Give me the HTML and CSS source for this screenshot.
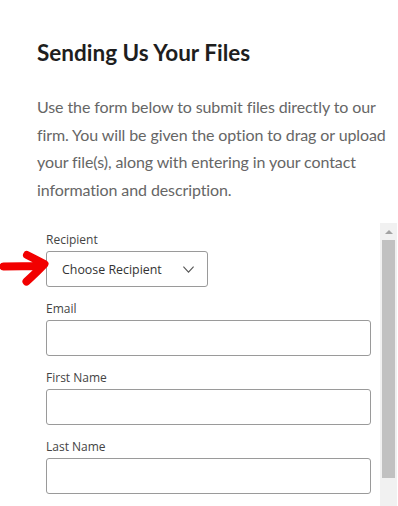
FILE: index.html
```html
<!DOCTYPE html>
<html>
<head>
<meta charset="utf-8">
<link rel="stylesheet" href="styles.css">
</head>
<body>
<div class="page">
  <div class="intro">
    <h1 class="title">Sending Us Your Files</h1>
    <p class="lead">Use the form below to submit files directly to our<br>firm. You will be given the option to drag or upload<br>your file(s), along with entering in your contact<br>information and description.</p>
  </div>
  <div class="frame">
    <form class="form">
      <div class="field">
        <label class="label">Recipient</label>
        <div class="select">
          <span class="select-text">Choose Recipient</span>
          <svg class="chev" width="11" height="7" viewBox="0 0 11 7"><path d="M0.4 0.6 L5.5 6.2 L10.6 0.6" fill="none" stroke="#555" stroke-width="1.1"/></svg>
        </div>
      </div>
      <div class="field">
        <label class="label">Email</label>
        <div class="input"></div>
      </div>
      <div class="field">
        <label class="label">First Name</label>
        <div class="input"></div>
      </div>
      <div class="field">
        <label class="label">Last Name</label>
        <div class="input"></div>
      </div>
    </form>
    <div class="scrollbar">
      <div class="sb-up"><span class="sb-tri"></span></div>
      <div class="sb-thumb"></div>
    </div>
  </div>
  <svg class="arrow" width="50" height="40" viewBox="0 0 50 40"><path d="M3.5 16.5 L41 16 M27 5 Q36 9.5 44.5 14 Q37 22 26.5 31.5" fill="none" stroke="#f20000" stroke-width="8" stroke-linecap="round" stroke-linejoin="round"/></svg>
</div>
</body>
</html>
```

FILE: styles.css
```css
html, body {
  margin: 0;
  padding: 0;
  background: #fff;
  overflow: hidden;
}
.page {
  position: relative;
  width: 398px;
  height: 506px;
  overflow: hidden;
}
.intro {
  padding: 40px 0 0 37px;
}
.title {
  margin: 0;
  font-family: Lato, "Liberation Sans", sans-serif;
  font-weight: 700;
  font-size: 22.5px;
  line-height: 26px;
  color: #1e1e1e;
  letter-spacing: 0;
}
.lead {
  margin: 27px 0 0 0;
  font-family: Lato, "Liberation Sans", sans-serif;
  font-size: 16px;
  line-height: 27.5px;
  color: #666;
  white-space: nowrap;
  letter-spacing: -0.1px;
}
.frame {
  display: flex;
  margin-top: 20px;
  height: 300px;
}
.form {
  flex: 1;
  padding: 9px 9px 0 46px;
  font-family: "Open Sans", "Liberation Sans", sans-serif;
}
.field {
  margin-bottom: 14px;
}
.label {
  display: block;
  font-size: 12px;
  line-height: 16px;
  color: #444;
  margin-bottom: 3px;
}
.input {
  height: 36px;
  box-sizing: border-box;
  border: 1px solid #9a9a9a;
  border-radius: 3px;
}
.select {
  width: 162px;
  height: 36px;
  box-sizing: border-box;
  border: 1px solid #9a9a9a;
  border-radius: 3px;
  display: flex;
  align-items: center;
  justify-content: space-between;
  padding: 0 13px 0 15px;
}
.select-text {
  font-size: 12.4px;
  color: #333;
}
.chev {
  display: block;
  margin-top: 1px;
}
.scrollbar {
  width: 17px;
  margin-right: 1px;
  background: #f1f1f1;
  display: flex;
  flex-direction: column;
  align-items: center;
}
.sb-up {
  height: 17px;
  width: 17px;
  display: flex;
  align-items: center;
  justify-content: center;
}
.sb-tri {
  width: 0;
  height: 0;
  border-left: 4px solid transparent;
  border-right: 4px solid transparent;
  border-bottom: 4px solid #a3a3a3;
}
.sb-thumb {
  width: 13px;
  height: 238px;
  background: #c1c1c1;
}
.arrow {
  position: absolute;
  left: 0;
  top: 250px;
}
```
